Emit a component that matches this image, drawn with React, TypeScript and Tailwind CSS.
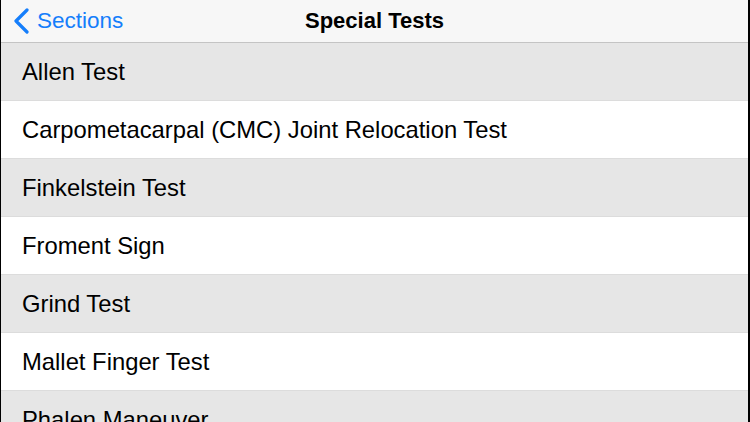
const tests = [
  "Allen Test",
  "Carpometacarpal (CMC) Joint Relocation Test",
  "Finkelstein Test",
  "Froment Sign",
  "Grind Test",
  "Mallet Finger Test",
  "Phalen Maneuver",
];

export default function App() {
  return (
    <div
      className="w-[750px] h-[422px] overflow-hidden bg-black flex"
      style={{ fontFamily: '"Liberation Sans", Arial, sans-serif' }}
    >
      <div className="ml-px mr-[2px] flex-1 flex flex-col bg-white overflow-hidden">
        <header className="h-[43px] shrink-0 bg-[#f7f7f7] border-b border-[#c4c4c4] flex items-center relative">
          <div className="flex items-center pl-[11px] text-[#157efb]">
            <svg width="18" height="26" viewBox="0 0 18 26" fill="none">
              <path d="M15 2 L4 13 L15 24" stroke="currentColor" strokeWidth="3.2" strokeLinecap="round" strokeLinejoin="round" />
            </svg>
            <span className="ml-[7px] text-[22.5px] leading-none">Sections</span>
          </div>
          <h1 className="absolute inset-x-0 text-center text-[22px] font-bold text-black pointer-events-none leading-none">
            Special Tests
          </h1>
        </header>
        <ul className="flex flex-col">
          {tests.map((t, i) => (
            <li
              key={t}
              className={`h-[58px] shrink-0 flex items-center pl-[21px] text-[23.8px] text-black ${
                i % 2 === 0 ? "bg-[#e6e6e6]" : "bg-white"
              } border-b border-[#dcdcdc]`}
            >
              {t}
            </li>
          ))}
        </ul>
      </div>
    </div>
  );
}
